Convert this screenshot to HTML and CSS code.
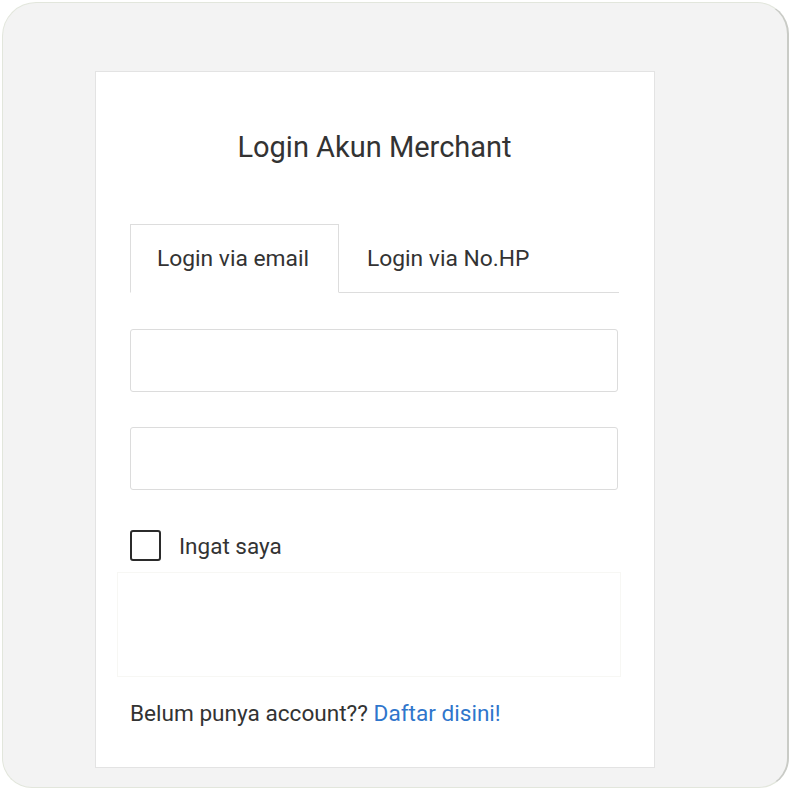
FILE: index.html
```html
<!DOCTYPE html>
<html lang="id">
<head>
<meta charset="utf-8">
<title>Login Akun Merchant</title>
<link rel="stylesheet" href="styles.css">
</head>
<body>
<div class="frame">
  <div class="card">
    <h1 class="title">Login Akun Merchant</h1>
    <div class="tabs">
      <div class="tab active">Login via email</div>
      <div class="tab">Login via No.HP</div>
      <div class="tab-rest"></div>
    </div>
    <div class="field"><input class="input" type="text" aria-label="Email"></div>
    <div class="field"><input class="input" type="password" aria-label="Password"></div>
    <label class="remember">
      <span class="check"></span>
      <span class="remember-text">Ingat saya</span>
    </label>
    <div class="captcha"></div>
    <p class="footer">Belum punya account?? <a class="link" href="#">Daftar disini!</a></p>
  </div>
</div>
</body>
</html>
```
FILE: styles.css
```css
html, body {
  margin: 0;
  padding: 0;
  background: #ffffff;
}
body {
  font-family: Roboto, "Liberation Sans", Arial, sans-serif;
  color: #333333;
}
.frame {
  box-sizing: border-box;
  margin: 2px 0 0 2px;
  width: 787px;
  height: 786px;
  background: #f3f3f3;
  border: 1px solid #e2e6dc;
  border-right: 2px solid #c9cbc6;
  border-radius: 34px 32px 30px 30px;
  padding: 68px 0 0 92px;
}
.card {
  box-sizing: border-box;
  width: 560px;
  height: 697px;
  background: #ffffff;
  border: 1px solid #e3e3e3;
  padding: 0 35px 0 34px;
}
.title {
  margin: 58px 0 0;
  font-size: 29px;
  line-height: 34px;
  font-weight: 400;
  text-align: center;
  color: #333333;
}
.tabs {
  display: flex;
  margin-top: 60px;
  height: 69px;
}
.tab {
  box-sizing: border-box;
  padding: 0 28px;
  display: flex;
  align-items: center;
  font-size: 22.8px;
  color: #333333;
  border-bottom: 1px solid #dddddd;
}
.tab.active {
  width: 209px;
  padding-left: 26px;
  border: 1px solid #dddddd;
  border-bottom-color: transparent;
  background: #ffffff;
}
.tab-rest {
  flex: 1;
  border-bottom: 1px solid #dddddd;
}
.field {
  margin-top: 36px;
}
.field + .field {
  margin-top: 35px;
}
.input {
  display: block;
  box-sizing: border-box;
  width: 488px;
  height: 63px;
  border: 1px solid #dcdcdc;
  border-radius: 3px;
  background: #ffffff;
  margin: 0;
}
.remember {
  display: flex;
  align-items: center;
  margin-top: 40px;
  height: 31px;
}
.check {
  box-sizing: border-box;
  width: 31px;
  height: 31px;
  border: 2.5px solid #2b2b2b;
  border-radius: 3px;
  background: #ffffff;
}
.remember-text {
  margin-left: 18px;
  font-size: 22.5px;
  color: #333333;
}
.captcha {
  box-sizing: border-box;
  margin: 11px 0 0 -13px;
  width: 504px;
  height: 105px;
  border: 1px solid #f7f7f4;
}
.footer {
  margin: 23px 0 0;
  font-size: 22.6px;
  line-height: 27px;
  color: #333333;
}
.link {
  color: #2f76cc;
  text-decoration: none;
}
```
